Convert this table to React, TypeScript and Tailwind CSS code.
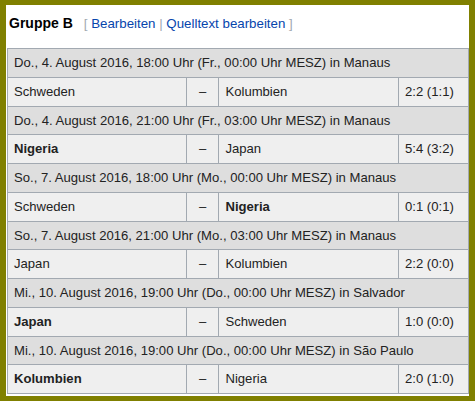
import { Fragment } from 'react';

const games = [
  {
    head: 'Do., 4. August 2016, 18:00 Uhr (Fr., 00:00 Uhr MESZ) in Manaus',
    home: 'Schweden',
    away: 'Kolumbien',
    win: '',
    score: '2:2 (1:1)',
  },
  {
    head: 'Do., 4. August 2016, 21:00 Uhr (Fr., 03:00 Uhr MESZ) in Manaus',
    home: 'Nigeria',
    away: 'Japan',
    win: 'home',
    score: '5:4 (3:2)',
  },
  {
    head: 'So., 7. August 2016, 18:00 Uhr (Mo., 00:00 Uhr MESZ) in Manaus',
    home: 'Schweden',
    away: 'Nigeria',
    win: 'away',
    score: '0:1 (0:1)',
  },
  {
    head: 'So., 7. August 2016, 21:00 Uhr (Mo., 03:00 Uhr MESZ) in Manaus',
    home: 'Japan',
    away: 'Kolumbien',
    win: '',
    score: '2:2 (0:0)',
  },
  {
    head: 'Mi., 10. August 2016, 19:00 Uhr (Do., 00:00 Uhr MESZ) in Salvador',
    home: 'Japan',
    away: 'Schweden',
    win: 'home',
    score: '1:0 (0:0)',
  },
  {
    head: 'Mi., 10. August 2016, 19:00 Uhr (Do., 00:00 Uhr MESZ) in São Paulo',
    home: 'Kolumbien',
    away: 'Nigeria',
    win: 'home',
    score: '2:0 (1:0)',
  },
];

export default function App() {
  return (
    <div
      className="w-[475px] h-[401px] bg-[#808000] pt-[5px] pb-[5px] pl-[6px] pr-[6px] text-[#222]"
      style={{ fontFamily: '"Liberation Sans", Arial, sans-serif' }}
    >
      <div className="h-full bg-white pl-[1px] pr-[1px]">
        <div className="flex items-baseline h-[43px] pt-[8px] pl-[2px] text-[14px]">
          <span className="font-bold text-black">Gruppe B</span>
          <span className="ml-[11px] text-[13.3px] text-[#a2a9b1]">
            [ <span className="text-[#0645ad]">Bearbeiten</span> | <span className="text-[#0645ad]">Quelltext bearbeiten</span> ]
          </span>
        </div>
        <table className="w-[462px] border-collapse border border-[#a2a9b1] text-[13.1px] bg-[#f8f9fa]">
          <colgroup>
            <col className="w-[179px]" />
            <col className="w-[33px]" />
            <col className="w-[180px]" />
            <col className="w-[70px]" />
          </colgroup>
          <tbody>
            {games.map((g) => (
              <Fragment key={g.head}>
                <tr className="h-[28.75px] bg-[#dedede]">
                  <td colSpan={4} className="border border-[#a2a9b1] px-[6px] whitespace-nowrap">
                    {g.head}
                  </td>
                </tr>
                <tr className="h-[28.75px] bg-[#efefef]">
                  <td className={`border border-[#a2a9b1] px-[6px] ${g.win === 'home' ? 'font-bold' : ''}`}>{g.home}</td>
                  <td className="border border-[#a2a9b1] text-center">–</td>
                  <td className={`border border-[#a2a9b1] px-[6px] ${g.win === 'away' ? 'font-bold' : ''}`}>{g.away}</td>
                  <td className="border border-[#a2a9b1] px-[6px] whitespace-nowrap">{g.score}</td>
                </tr>
              </Fragment>
            ))}
          </tbody>
        </table>
      </div>
    </div>
  );
}
